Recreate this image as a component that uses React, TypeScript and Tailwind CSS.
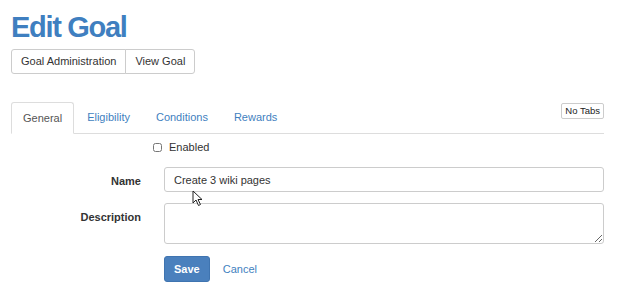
import React, { useState } from 'react';

const tabs = ['General', 'Eligibility', 'Conditions', 'Rewards'];

export default function App() {
  const [active, setActive] = useState('General');
  const [name, setName] = useState('Create 3 wiki pages');

  return (
    <div className="relative w-[620px] h-[291px] bg-white text-[#333] text-[11px] overflow-hidden" style={{ fontFamily: '"Liberation Sans", Arial, sans-serif' }}>
      <div className="pl-[11px] pr-[16px]">
        <h1 className="pt-[11px] text-[29px] leading-[32px] font-bold text-[#3f7fc0] tracking-[-1.3px]">Edit Goal</h1>

        <div className="mt-[6px] flex">
          <button className="h-[25px] px-[9px] border border-[#ccc] rounded-l-[3px] bg-white text-[11px] text-[#333]">Goal Administration</button>
          <button className="h-[25px] px-[9px] -ml-px border border-[#ccc] rounded-r-[3px] bg-white text-[11px] text-[#333]">View Goal</button>
        </div>

        <div className="mt-[28px] flex items-end border-b border-[#ddd]">
          {tabs.map((t) =>
            t === active ? (
              <button key={t} onClick={() => setActive(t)} className="-mb-px h-[32px] px-[11px] border border-[#ddd] border-b-white rounded-t-[3px] bg-white text-[#555]">
                {t}
              </button>
            ) : (
              <button key={t} onClick={() => setActive(t)} className="h-[31px] px-[13px] text-[#3f7fc0]">
                {t}
              </button>
            )
          )}
          <div className="flex-1 self-stretch flex justify-end items-start">
            <button className="mt-[1px] h-[16px] px-[3px] border border-[#ccc] rounded-[2px] bg-white text-[9.5px] text-[#222] leading-none">No Tabs</button>
          </div>
        </div>

        <label className="mt-[6px] ml-[142px] flex items-center gap-[7px] h-[14px]">
          <input type="checkbox" className="w-[9px] h-[9px] accent-[#888]" />
          <span>Enabled</span>
        </label>

        <div className="mt-[13px] grid grid-cols-[130px_1fr] gap-x-[23px] gap-y-[11px]">
          <div className="text-right font-bold pt-[6px]">Name</div>
          <input
            value={name}
            onChange={(e) => setName(e.target.value)}
            className="h-[25px] px-[9px] border border-[#ccc] rounded-[3px] text-[11px] text-[#333] outline-none"
          />
          <div className="text-right font-bold pt-[6px]">Description</div>
          <textarea className="h-[41px] px-[9px] py-[5px] border border-[#ccc] rounded-[3px] text-[11px] outline-none resize-y" />
          <div />
          <div className="flex items-center gap-[13px] pt-[1px]">
            <button className="h-[26px] px-[9px] rounded-[3px] bg-[#4a80bd] border border-[#3f74b0] text-white font-bold">Save</button>
            <button className="text-[#3f7fc0]">Cancel</button>
          </div>
        </div>
      </div>

      <svg className="absolute left-[192px] top-[190px]" width="13" height="17" viewBox="0 0 13 17">
        <path d="M1 1 L1 13 L4 10 L6.5 15.5 L8.5 14.5 L6 9.5 L10 9.5 Z" fill="#fff" stroke="#222" strokeWidth="1" strokeLinejoin="round" />
      </svg>
    </div>
  );
}
